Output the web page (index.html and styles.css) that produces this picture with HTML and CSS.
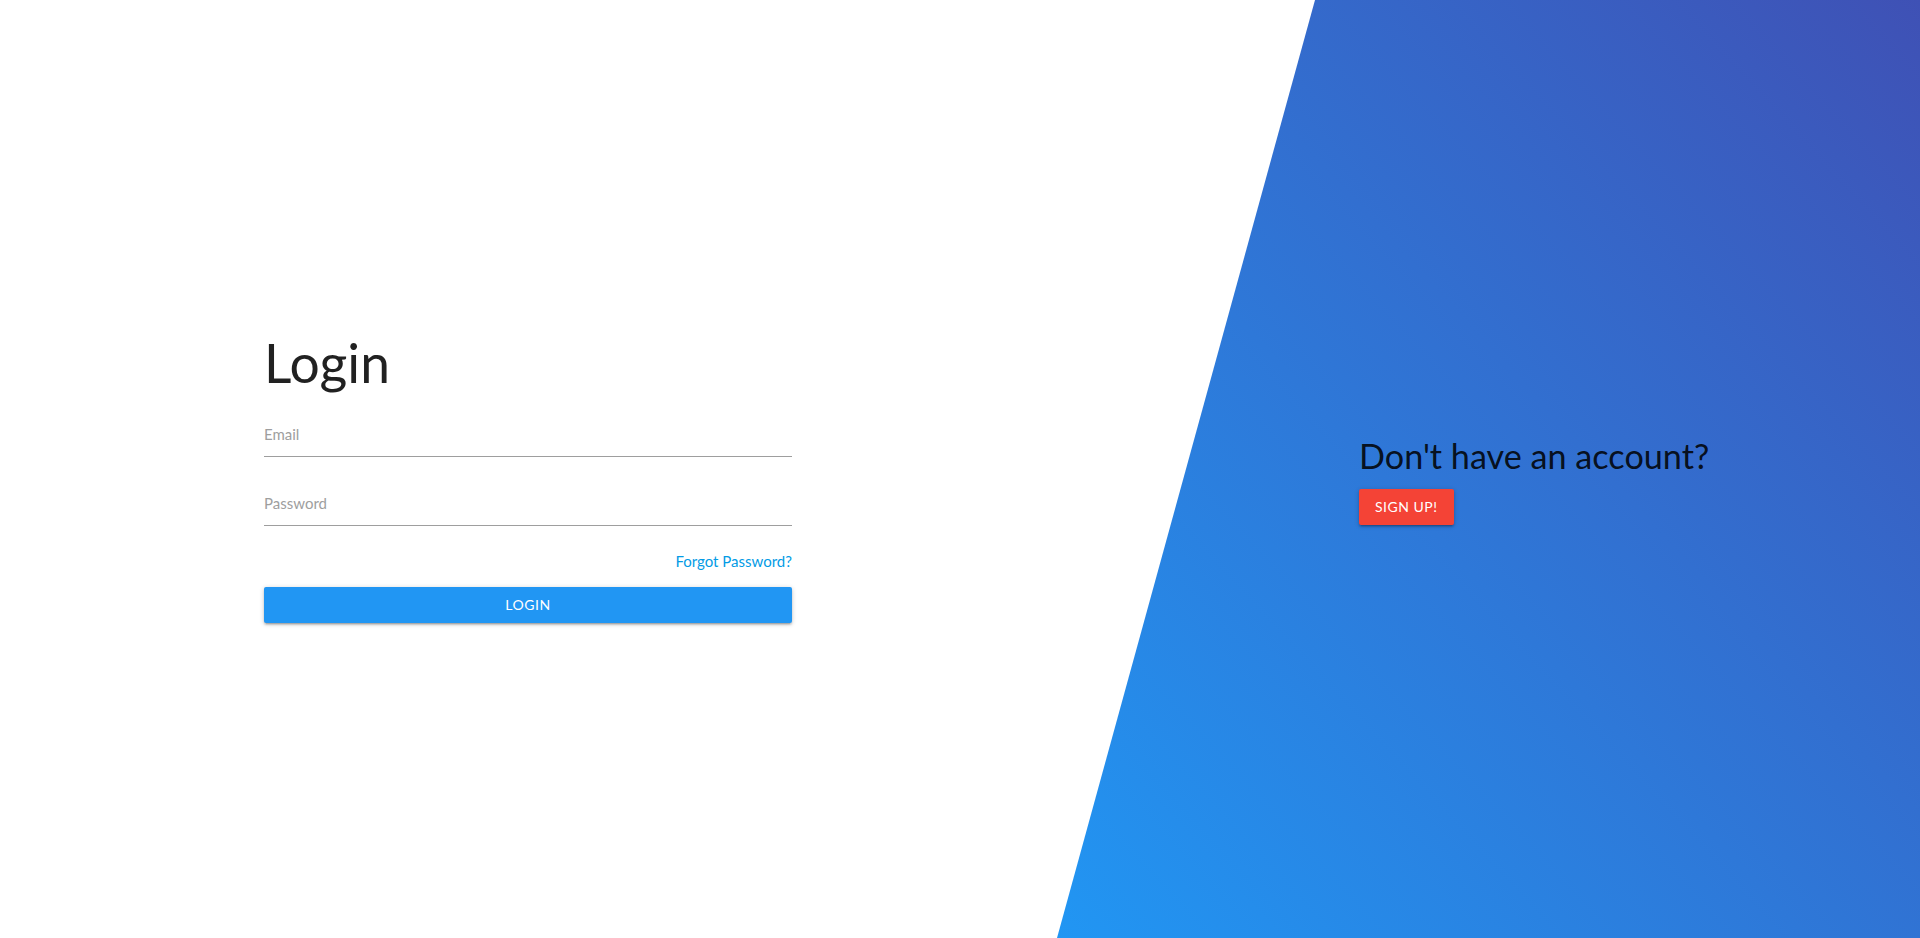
FILE: index.html
```html
<!DOCTYPE html>
<html lang="en">
<head>
<meta charset="utf-8">
<title>Login</title>
<link rel="stylesheet" href="styles.css">
</head>
<body>
<div class="page">
  <section class="left">
    <form class="login-form">
      <h2 class="title">Login</h2>
      <input class="field" type="email" placeholder="Email">
      <input class="field" type="password" placeholder="Password">
      <div class="forgot-row"><a class="forgot" href="#">Forgot Password?</a></div>
      <button class="btn btn-blue btn-block" type="button">Login</button>
    </form>
  </section>
  <section class="right">
    <div class="signup">
      <h4 class="signup-title">Don't have an account?</h4>
      <button class="btn btn-red" type="button">Sign up!</button>
    </div>
  </section>
</div>
</body>
</html>
```

FILE: styles.css
```css
* { box-sizing: border-box; }
html, body { margin: 0; padding: 0; }
body {
  font-family: "Lato", "Open Sans", sans-serif;
  color: rgba(0, 0, 0, 0.87);
  background: #fff;
  overflow: hidden;
}
.page {
  display: flex;
  width: 1920px;
  height: 938px;
}
.left {
  width: 1057px;
  flex: none;
  padding-top: 333px;
  padding-left: 264px;
}
.login-form {
  width: 528px;
  display: flex;
  flex-direction: column;
}
.title {
  font-size: 53.4px;
  font-weight: 400;
  line-height: 58.7px;
  margin: 0 0 20px 0;
  color: rgba(0, 0, 0, 0.87);
}
.field {
  display: block;
  width: 100%;
  height: 45px;
  border: none;
  border-bottom: 1px solid #9e9e9e;
  outline: none;
  padding: 0;
  margin: 0 0 24px 0;
  font-family: inherit;
  font-size: 15px;
  background: transparent;
}
.field::placeholder { color: #9e9e9e; }
.forgot-row {
  display: flex;
  justify-content: flex-end;
  margin-top: 0;
  line-height: 22px;
  height: 22px;
}
.forgot {
  color: #039be5;
  text-decoration: none;
  font-size: 15px;
}
.btn {
  height: 36px;
  line-height: 36px;
  padding: 0 16px;
  border: none;
  border-radius: 2px;
  color: #fff;
  font-family: inherit;
  font-size: 14px;
  letter-spacing: 0.5px;
  text-transform: uppercase;
  cursor: pointer;
  box-shadow: 0 2px 2px 0 rgba(0,0,0,0.14), 0 3px 1px -2px rgba(0,0,0,0.12), 0 1px 5px 0 rgba(0,0,0,0.2);
}
.btn-blue { background: #2196f3; margin-top: 15px; }
.btn-block { width: 100%; }
.btn-red { background: #f44336; }
.right {
  flex: 1;
  height: 938px;
  background: linear-gradient(to top right, #2196f3, #3f51b5);
  clip-path: polygon(258px 0, 100% 0, 100% 100%, 0 100%);
  padding-top: 437px;
  padding-left: 302px;
}
.signup {
  display: flex;
  flex-direction: column;
  align-items: flex-start;
}
.signup-title {
  font-size: 34.2px;
  font-weight: 400;
  line-height: 37.6px;
  margin: 0 0 14px 0;
  color: rgba(0, 0, 0, 0.87);
}
```
